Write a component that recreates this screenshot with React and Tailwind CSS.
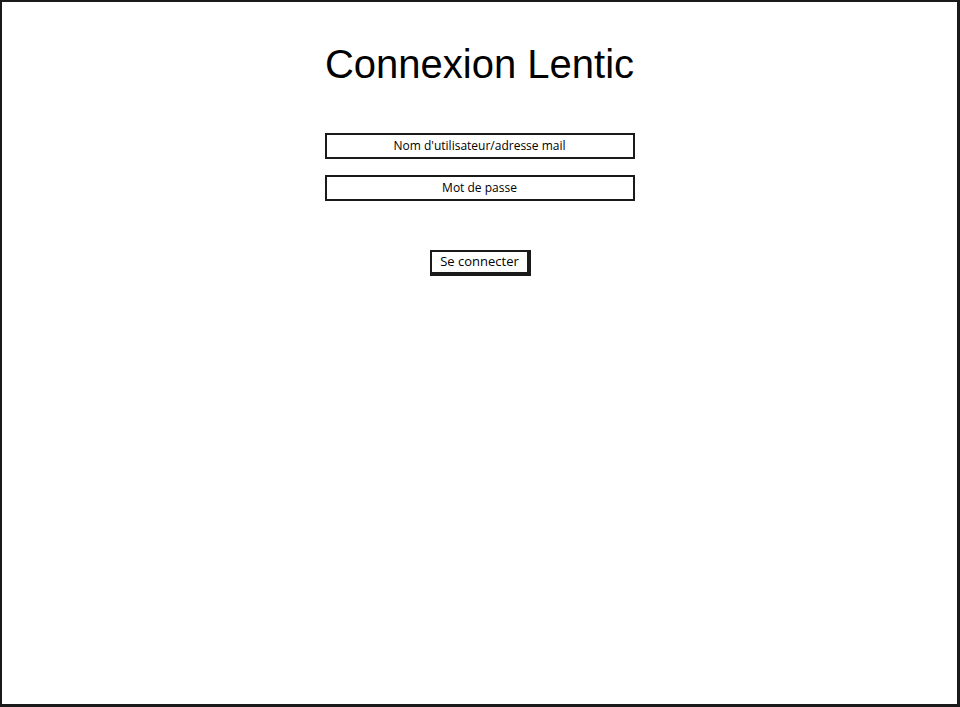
import React from 'react';

const Field = ({ label }) => (
  <div className="w-[310px] h-[26px] border-2 border-[#1a1a1a] bg-white flex items-center justify-center text-[12px] text-black">
    {label}
  </div>
);

export default function App() {
  return (
    <div
      className="w-[960px] h-[707px] bg-white border-2 border-[#1a1a1a] border-r-[3px] border-b-[3px] flex flex-col items-center"
      style={{ fontFamily: '"Open Sans", "Liberation Sans", sans-serif' }}
    >
      <h1 className="mt-[38px] text-[40px] leading-[48px] text-black" style={{ fontFamily: '"Liberation Sans", sans-serif' }}>
        Connexion Lentic
      </h1>

      <div className="mt-[45px] flex flex-col gap-[16px]">
        <Field label="Nom d'utilisateur/adresse mail" />
        <Field label="Mot de passe" />
      </div>

      <button className="mt-[49px] ml-[2px] w-[101px] h-[26px] bg-white border-2 border-[#1a1a1a] border-r-[4px] border-b-[4px] text-[13px] text-black flex items-center justify-center">
        Se connecter
      </button>
    </div>
  );
}
